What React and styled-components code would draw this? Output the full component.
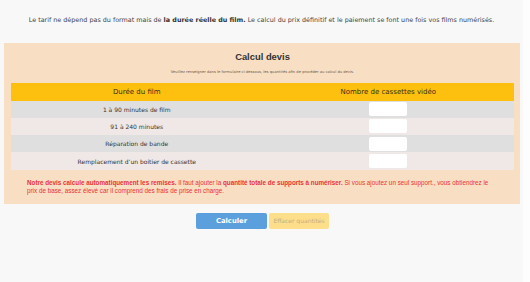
import styled, { createGlobalStyle } from "styled-components";

const GlobalStyle = createGlobalStyle`
  html, body {
    margin: 0;
    padding: 0;
    background: #fdfdfd;
  }

  body {
    font-family: "DejaVu Sans", "Liberation Sans", sans-serif;
  }
`;

const Page = styled.div`
  width: 523px;
  height: 282px;
  background: #f8f8f8;
  padding-top: 15px;
  box-sizing: border-box;
`;

const Intro = styled.p`
  margin: 0 0 18px 0;
  text-align: center;
  font-size: 6.4px;
  line-height: 10px;
  color: #444444;

  b {
    color: #333333;
  }
`;

const Panel = styled.div`
  margin-left: 4px;
  width: 516px;
  background: #f8dec2;
  padding: 7px 6px 9.5px 7px;
  box-sizing: border-box;
`;

const Title = styled.h2`
  margin: 0;
  text-align: center;
  font-family: "Liberation Sans", "DejaVu Sans", sans-serif;
  font-size: 9.4px;
  line-height: 14px;
  font-weight: bold;
  color: #333333;
`;

const Sub = styled.p`
  margin: 5px 0 0 0;
  text-align: center;
  font-size: 3.7px;
  line-height: 6px;
  color: #6a5a50;
`;

const Table = styled.table`
  width: 503px;
  margin-top: 8px;
  border-collapse: collapse;
  font-size: 6px;
  color: #333333;
`;

const HeadCell = styled.th`
  width: 50%;
  height: 17.5px;
  padding: 0;
  background: #fdc00f;
  font-weight: normal;
  font-size: 7px;
  color: #3a2e10;
  text-align: center;
`;

const Row = styled.tr`
  background: ${(p) => (p.$odd ? "#e0dfdf" : "#efe8e6")};
`;

const Cell = styled.td`
  height: 17.3px;
  padding: 0;
  text-align: center;
  vertical-align: middle;
`;

const Qty = styled.input`
  display: block;
  margin: 0 auto;
  width: 38px;
  height: 14px;
  box-sizing: border-box;
  border: none;
  border-radius: 2px;
  background: #ffffff;
  padding: 0;
`;

const Note = styled.p`
  margin: 9.6px 0 0 16px;
  width: 470px;
  font-family: "Liberation Sans", "DejaVu Sans", sans-serif;
  font-size: 6.3px;
  line-height: 7.4px;
  color: #e8333a;
`;

const Buttons = styled.div`
  display: flex;
  justify-content: center;
  gap: 2px;
  margin-top: 9px;
  padding-left: 2px;
`;

const Button = styled.button`
  height: 16px;
  border: none;
  border-radius: 2px;
  padding: 0;
  font-family: "DejaVu Sans", "Liberation Sans", sans-serif;
  width: ${(p) => (p.$primary ? "71px" : "60px")};
  background: ${(p) => (p.$primary ? "#5b9fdd" : "#fddf8b")};
  color: ${(p) => (p.$primary ? "#ffffff" : "#bfae82")};
  font-size: ${(p) => (p.$primary ? "6.8px" : "6px")};
  font-weight: ${(p) => (p.$primary ? "bold" : "normal")};
`;

const rows = [
  "1 à 90 minutes de film",
  "91 à 240 minutes",
  "Réparation de bande",
  "Remplacement d’un boitier de cassette",
];

export default function App() {
  return (
    <>
      <GlobalStyle />
      <Page>
        <Intro>
          Le tarif ne dépend pas du format mais de{" "}
          <b>la durée réelle du film.</b> Le calcul du prix définitif et le
          paiement se font une fois vos films numérisés.
        </Intro>
        <Panel>
          <Title>Calcul devis</Title>
          <Sub>
            Veuillez renseigner dans le formulaire ci-dessous, les quantités
            afin de procéder au calcul du devis.
          </Sub>
          <Table>
            <thead>
              <tr>
                <HeadCell>Durée du film</HeadCell>
                <HeadCell>Nombre de cassettes vidéo</HeadCell>
              </tr>
            </thead>
            <tbody>
              {rows.map((label, i) => (
                <Row key={label} $odd={i % 2 === 0}>
                  <Cell>{label}</Cell>
                  <Cell>
                    <Qty type="text" />
                  </Cell>
                </Row>
              ))}
            </tbody>
          </Table>
          <Note>
            <b>Notre devis calcule automatiquement les remises.</b> Il faut
            ajouter la <b>quantité totale de supports à numériser.</b> Si vous
            ajoutez un seul support., vous obtiendrez le prix de base, assez
            élevé car il comprend des frais de prise en charge.
          </Note>
        </Panel>
        <Buttons>
          <Button $primary>Calculer</Button>
          <Button>Effacer quantités</Button>
        </Buttons>
      </Page>
    </>
  );
}
